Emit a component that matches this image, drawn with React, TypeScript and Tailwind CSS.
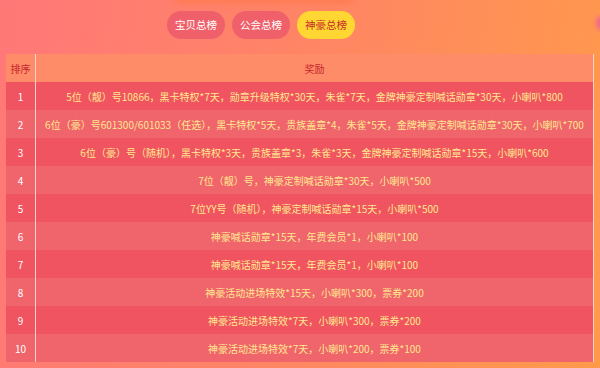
import React from "react";

const rows = [
  "5位（靓）号10866，黑卡特权*7天，勋章升级特权*30天，朱雀*7天，金牌神豪定制喊话勋章*30天，小喇叭*800",
  "6位（豪）号601300/601033（任选），黑卡特权*5天，贵族盖章*4，朱雀*5天，金牌神豪定制喊话勋章*30天，小喇叭*700",
  "6位（豪）号（随机），黑卡特权*3天，贵族盖章*3，朱雀*3天，金牌神豪定制喊话勋章*15天，小喇叭*600",
  "7位（靓）号，神豪定制喊话勋章*30天，小喇叭*500",
  "7位YY号（随机），神豪定制喊话勋章*15天，小喇叭*500",
  "神豪喊话勋章*15天，年费会员*1，小喇叭*100",
  "神豪喊话勋章*15天，年费会员*1，小喇叭*100",
  "神豪活动进场特效*15天，小喇叭*300，票券*200",
  "神豪活动进场特效*7天，小喇叭*300，票券*200",
  "神豪活动进场特效*7天，小喇叭*200，票券*100",
];

export default function App() {
  return (
    <div
      className="relative w-[600px] h-[368px] overflow-hidden bg-[linear-gradient(100deg,#ff7878_0%,#ff8466_45%,#ff9a4a_100%)]"
      style={{ fontFamily: '"Noto Sans CJK SC", "Liberation Sans", sans-serif' }}
    >
      <div className="absolute left-[175px] top-[-6px] w-[180px] h-[9px] rounded-full bg-[#ff7a50] blur-[3px]" />
      <div className="absolute right-[-6px] top-[16px] w-[10px] h-[14px] rounded-full bg-[#f06a8a] blur-[2px]" />
      <div className="relative flex gap-[7px] pl-[167px] pt-[11px]">
        <div className="w-[58px] h-[28px] rounded-full bg-[#f0606a] text-white text-[10.5px] flex items-center justify-center">宝贝总榜</div>
        <div className="w-[58px] h-[28px] rounded-full bg-[#f0606a] text-white text-[10.5px] flex items-center justify-center">公会总榜</div>
        <div className="w-[58px] h-[28px] rounded-full bg-[#ffd632] text-[#c8302a] text-[10.5px] flex items-center justify-center">神豪总榜</div>
      </div>
      <div className="relative mt-[15px] ml-[6px] w-[588px] border-r border-[#ffd0c8]">
        <div className="flex h-[28px] bg-[#ff8c68] text-[#c4262c] text-[10px]">
          <div className="w-[30px] border-r border-[#ffd0c8] flex items-center justify-center">排序</div>
          <div className="flex-1 flex items-center justify-center">奖励</div>
        </div>
        {rows.map((r, i) => (
          <div
            key={i}
            className={`flex h-[28px] text-[10px] ${i % 2 === 0 ? "bg-[#f05460]" : "bg-[#f0646c]"}`}
          >
            <div className="w-[30px] border-r border-[#ffd0c8] flex items-center justify-center text-white">{i + 1}</div>
            <div className="flex-1 flex items-center justify-center text-[#ffe98e] whitespace-nowrap">{r}</div>
          </div>
        ))}
      </div>
    </div>
  );
}
